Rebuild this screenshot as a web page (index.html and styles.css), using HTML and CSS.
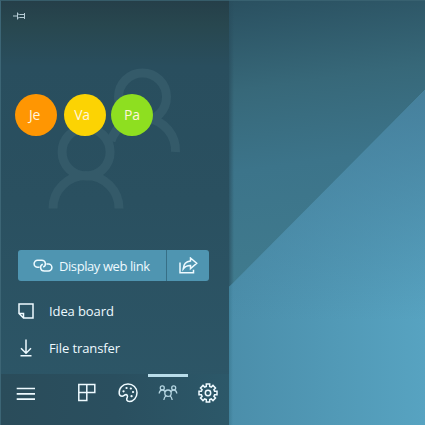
FILE: index.html
```html
<!DOCTYPE html>
<html lang="en">
<head>
<meta charset="utf-8">
<title>Display panel</title>
<link rel="stylesheet" href="styles.css">
</head>
<body>
<div class="screen">
  <aside class="panel">
    <svg class="watermark" viewBox="0 0 229 425" aria-hidden="true">
      <path d="M62.100 152a24 24 0 1 0 48 0a24 24 0 1 0-48 0M53 208.500a33 33 0 0 1 66 0M118.500 97a24 24 0 1 1 48 0a24 24 0 1 1-48 0M111 141A33 33 0 0 1 175.500 152"/>
    </svg>
    <header class="titlebar">
      <svg class="pin" viewBox="0 0 13 8"><path d="M0 4h4M4.500 .5v7M4.500 1.800l2 .7h5M4.500 6.200l2-.7h5M11.500 1v6"/></svg>
    </header>
    <div class="people">
      <span class="avatar orange">Je</span>
      <span class="avatar yellow">Va</span>
      <span class="avatar green">Pa</span>
    </div>
    <div class="share">
      <div class="link">
        <svg class="chain" viewBox="0 0 20 14"><path d="M6.500 8.200H4.600A3.500 3.500 0 0 1 4.600 1.200h4.200c4.200 0 4.800 5.600 1.400 6.800M13.500 5h1.900a3.500 3.500 0 0 1 0 7h-4.200c-4.200 0-4.800-5.600-1.400-6.800"/></svg>
        <span class="text display">Display web link</span>
      </div>
      <div class="send">
        <svg class="arrow" viewBox="0 0 19 17"><path d="M1 5.500v10.300h13.500v-3M11.500 1l6.200 5.200-6.200 5.300V8.600C8.500 8.500 6 9.500 4.200 12 4.500 7.200 7.500 4.200 11.500 3.900z"/></svg>
      </div>
    </div>
    <div class="row">
      <svg class="note" viewBox="0 0 16 16"><path d="M1 1h14v14H5.500L1 10.500zM1 10.500h4.500V15"/></svg>
      <span class="text">Idea board</span>
    </div>
    <div class="row">
      <svg class="down" viewBox="0 0 16 18"><path d="M8 .5v13.500M3 9.200l5 5 5-5M2.500 16.700h11"/></svg>
      <span class="text">File transfer</span>
    </div>
    <nav class="tabs">
      <div class="tab menu"><svg viewBox="0 0 20 20"><path d="M.7 5.500h18.300M.7 10.800h18.300M.7 16.100h18.300"/></svg></div>
      <div class="tab"><svg viewBox="0 0 20 20"><path d="M.8 1.500h16v8H.8zM.8 9.500v8h8v-16"/></svg></div>
      <div class="tab"><svg viewBox="0 0 20 20"><path d="M1.200 10.500C.8 5 4.700 1 10 1c5 0 9 3.800 9 8.800 0 5-3.700 8.700-7.500 8.700-3 0-3.300-2.300-2.300-4 .9-1.600-.3-3.400-2-2.700-1 .4-1.600 1.500-3.100 1.500-1.600 0-2.700-1-2.900-2.800z"/><path class="dots" d="M5.500 8.300h.1M8.500 5h.1M12.800 5.500h.1M15 9h.1M13.500 13.200h.1"/></svg></div>
      <div class="tab active"><svg viewBox="0 0 20 20"><circle cx="10" cy="10.200" r="3.200"/><circle cx="4.300" cy="4.900" r="2"/><circle cx="15.700" cy="4.900" r="2"/><path d="M5.800 17c.3-2 1-3.300 2.200-4.200M14.200 17c-.3-2-1-3.300-2.200-4.200M1.200 10.500c.2-3.500 4.400-4.800 6.100-1.400M18.800 10.500c-.2-3.500-4.400-4.800-6.100-1.400"/></svg></div>
      <div class="tab"><svg viewBox="0 0 20 20"><path d="M8.300 1h3.400v2.400l1.600.7L15 2.400 17.500 5l-1.600 1.700.7 1.600H19v3.400h-2.400l-.7 1.600 1.600 1.700-2.500 2.600-1.700-1.700-1.600.7V19H8.300v-2.400l-1.600-.7L5 17.600 2.500 15l1.600-1.700-.7-1.600H1V8.300h2.400l.7-1.600L2.500 5 5 2.400l1.700 1.700 1.600-.7z"/><circle cx="10" cy="10" r="2.700"/></svg></div>
    </nav>
  </aside>
  <main class="backdrop"><div class="light"></div></main>
</div>
</body>
</html>
```

FILE: styles.css
```css
* { box-sizing: border-box; }
body { margin: 0; color: #eefaff; font: 13px "Open Sans", "Noto Sans", sans-serif; }
svg { display: block; fill: none; stroke: currentColor; stroke-width: 1.5; flex: none; }
.screen { display: flex; width: 425px; height: 425px; overflow: hidden; }
.panel {
  position: relative;
  display: flex;
  flex-direction: column;
  width: 229px;
  height: 425px;
  border-left: 1px solid #3c6575;
  border-top: 1px solid #365c69;
  background: linear-gradient(180deg, #253f49 0, #28474f 24px, #294e5e 65px, #2a5060 200px, #2d5768 425px);
}
.watermark { position: absolute; left: -1px; top: -1px; width: 229px; height: 425px; stroke: #345a69; stroke-width: 9; }
.titlebar { height: 93px; padding: 11px 0 0 12px; }
.pin { width: 13px; height: 8px; stroke: #b5cbd5; stroke-width: 1; }
.people { position: relative; display: flex; gap: 7px; padding-left: 13.5px; }
.avatar { width: 42px; height: 42px; padding-right: 2px; border-radius: 50%; text-align: center; font-size: 14px; line-height: 42px; color: #fff5dc; letter-spacing: -0.2px; }
.orange { background: #ff9602; }
.yellow { background: #fcd303; padding-right: 5px; }
.green { background: #8edf20; margin-left: -1.5px; padding-right: 0; }
.share { display: flex; width: 191px; height: 31px; margin: 114px 0 11px 17px; border-radius: 3px; overflow: hidden; background: #4f95b1; }
.link { display: flex; align-items: center; width: 149px; padding-left: 15px; border-right: 1px solid #376f86; }
.chain { width: 20px; height: 14px; margin-right: 6px; }
.send { display: flex; flex: 1; align-items: center; justify-content: center; }
.arrow { width: 19px; height: 17px; }
.text { white-space: nowrap; line-height: 18px; font-size: 13px; letter-spacing: -0.1px; }
.text.display { letter-spacing: -0.42px; }
.row { display: flex; align-items: center; height: 37px; padding-left: 17px; }
.row svg { width: 16px; margin-right: 15px; }
.note { height: 16px; }
.down { height: 18px; }
.tabs { display: flex; height: 51px; margin-top: auto; padding-left: 5px; background: linear-gradient(90deg, #2a4c5a, #2a4f5f 50%, #2c5869); }
.tab { width: 40px; height: 51px; padding: 9px 10px; }
.tab svg { width: 20px; height: 20px; }
.tab.menu { width: 62px; }
.menu svg { stroke-width: 1.700; }
.dots { stroke-width: 2.200; stroke-linecap: round; }
.tab.active { padding-top: 6px; border-top: 3px solid #b9ddea; color: #b5d6e2; }
.active svg { stroke-width: 1.300; }
.backdrop { width: 196px; height: 425px; border-top: 1px solid #386170; background: linear-gradient(90deg, rgba(40,76,92,.7), rgba(40,76,92,0) 5px), linear-gradient(172deg, #2a5060 0, #376879 90px, #3c748a 170px, #407b8e 290px); }
.light {
  height: 424px;
  clip-path: polygon(0 286px, 196px 89px, 196px 424px, 0 424px);
  background: linear-gradient(90deg, #3f7f98 0, rgba(63,127,152,0) 4px), linear-gradient(180deg, rgba(68,124,152,.9) 90px, rgba(72,136,164,0) 320px), linear-gradient(90deg, #4b8eaa, #57a3c1);
}
```
